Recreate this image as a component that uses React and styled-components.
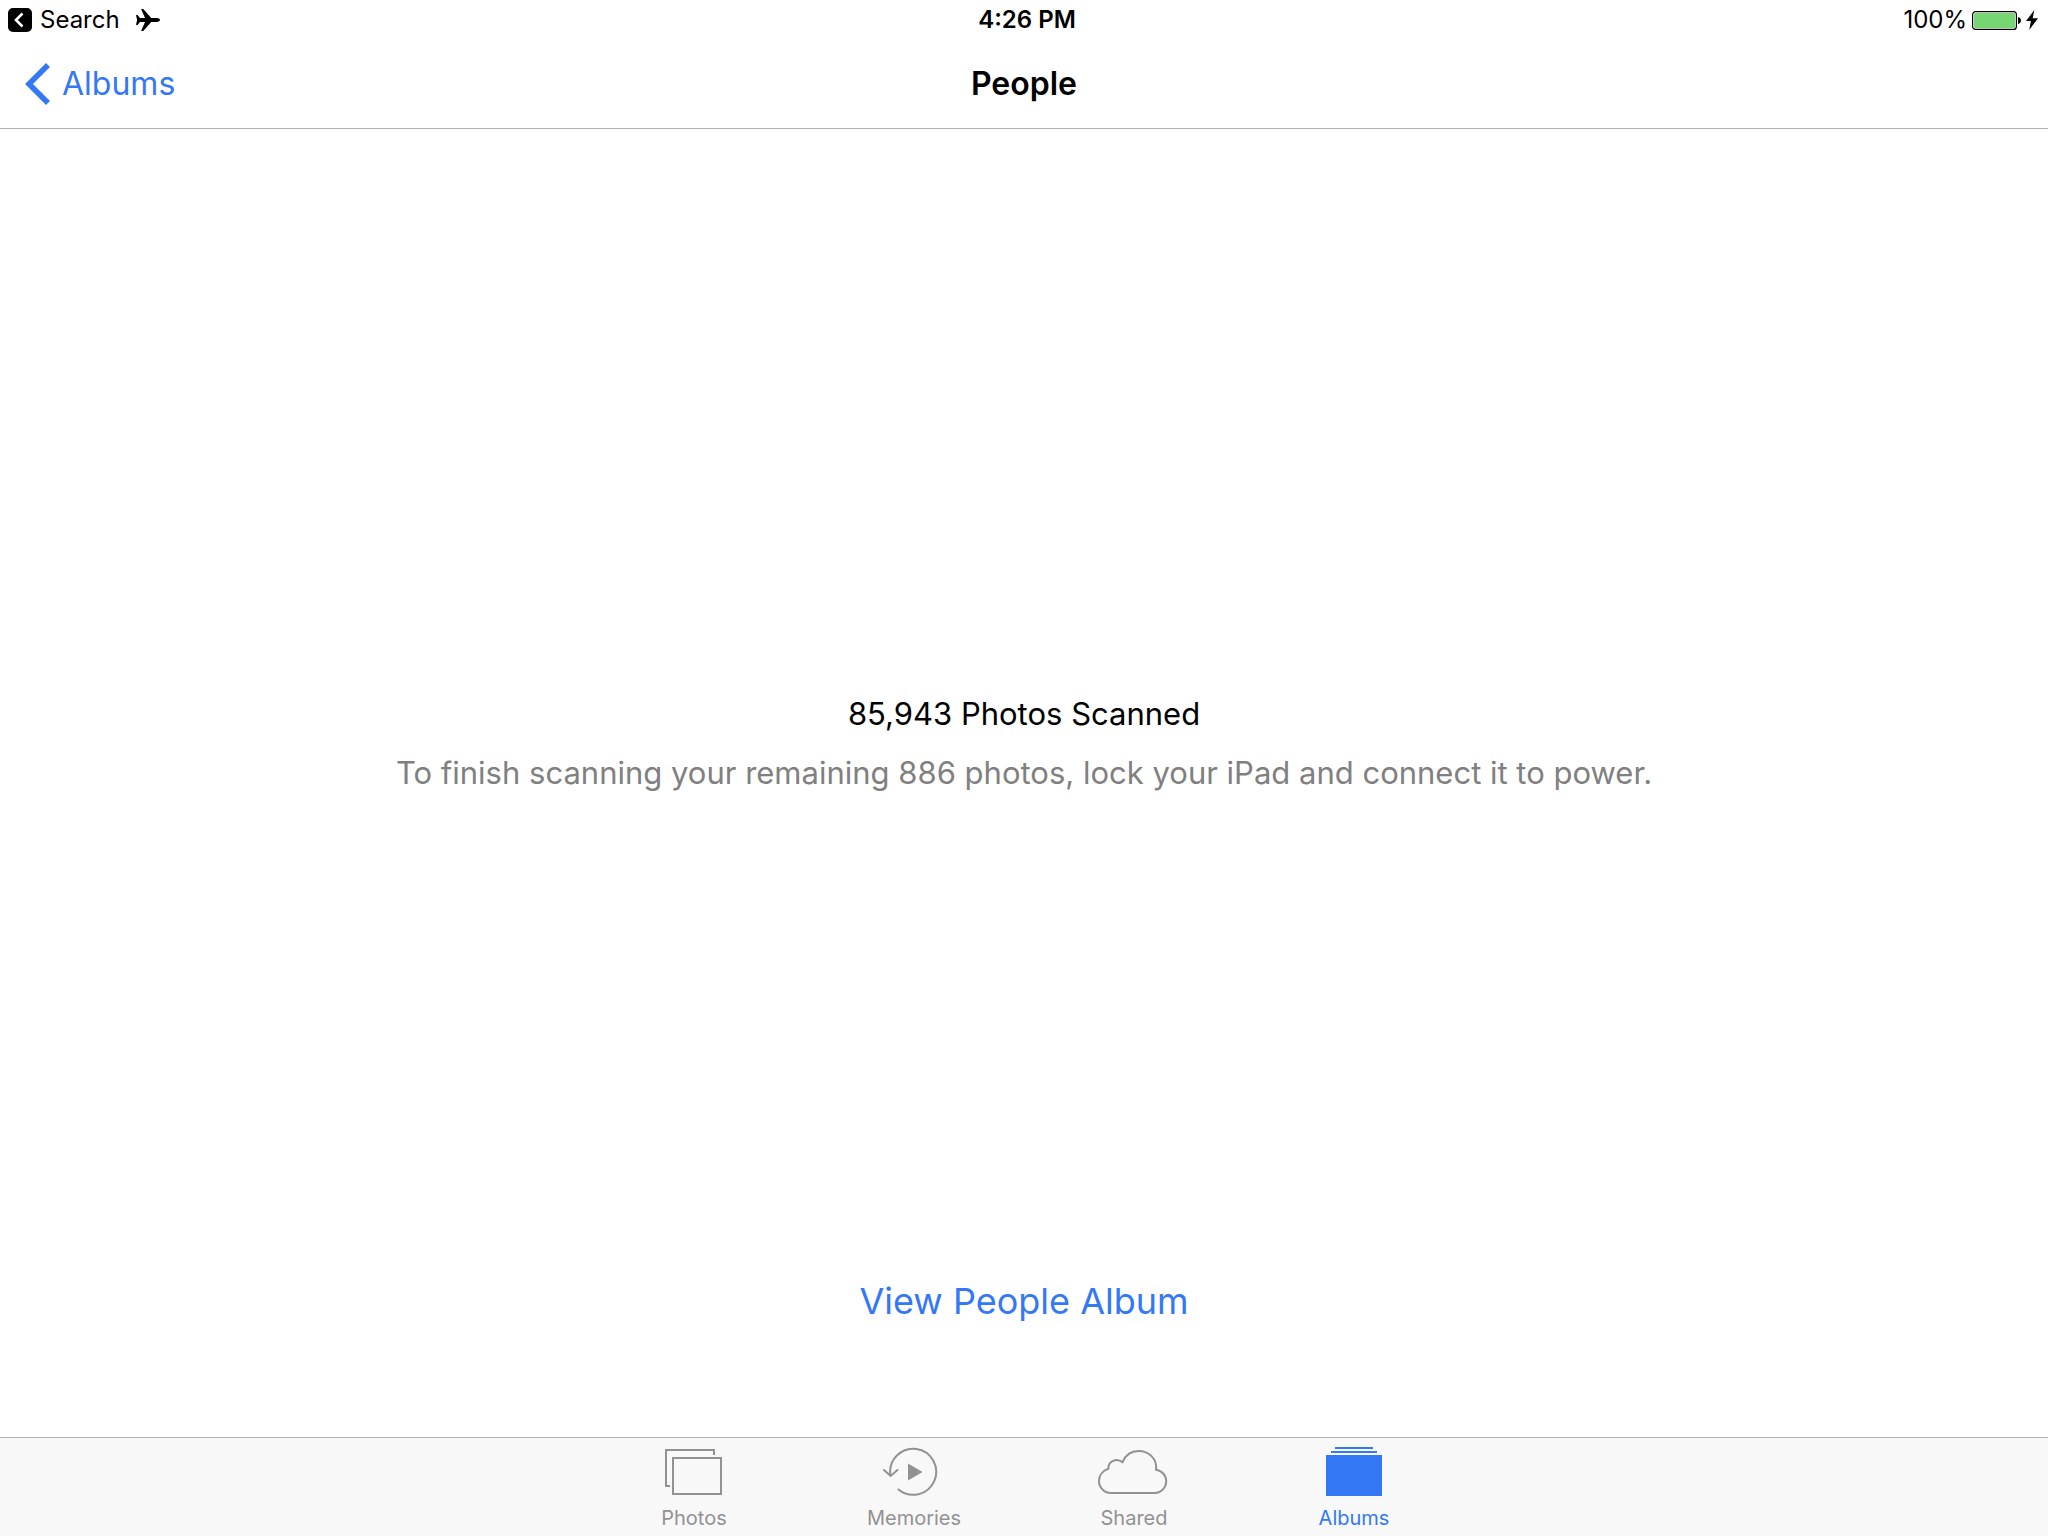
import React from 'react';
import styled, {createGlobalStyle} from "styled-components";

const tabs = [
    {name: 'Photos', icon: PhotosIcon},
    {name: 'Memories', icon: MemoriesIcon},
    {name: 'Shared', icon: CloudIcon},
    {name: 'Albums', icon: AlbumsIcon, active: true},
];

const App = () => {
    return (
        <Page>
            <GlobalStyle/>

            <StatusBar>
                <StatusGroup>
                    <BackToApp type="button">
                        <BackBadgeIcon/>
                        Search
                    </BackToApp>
                    <PlaneIcon/>
                </StatusGroup>
                <Clock>4:26 PM</Clock>
                <StatusGroup $end>
                    <span>100%</span>
                    <BatteryIcon/>
                    <BoltIcon/>
                </StatusGroup>
            </StatusBar>

            <NavBar>
                <BackLink href="#albums">
                    <ChevronIcon/>
                    Albums
                </BackLink>
                <Title>People</Title>
            </NavBar>

            <Content>
                <Message>
                    <Heading>85,943 Photos Scanned</Heading>
                    <Hint>To finish scanning your remaining 886 photos, lock your iPad and connect it to power.</Hint>
                </Message>
                <ViewButton type="button">View People Album</ViewButton>
            </Content>

            <TabBar>
                {tabs.map(({name, icon: Icon, active}) => (
                    <Tab key={name} href={`#${name.toLowerCase()}`} $active={active}
                         aria-current={active ? 'page' : undefined}>
                        <Icon/>
                        {name}
                    </Tab>
                ))}
            </TabBar>
        </Page>
    );
};

function BackBadgeIcon() {
    return (
        <svg width="24" height="24" viewBox="0 0 24 24" aria-hidden="true">
            <rect width="24" height="24" rx="5" fill="#000"/>
            <path d="M14.5 5.5L8 12l6.5 6.5" fill="none" stroke="#fff" strokeWidth="2.6"/>
        </svg>
    );
}

function PlaneIcon() {
    return (
        <svg width="24" height="22" viewBox="0 0 24 22" aria-hidden="true">
            <path d="M24 11c0 1.1-1.4 1.9-3.2 1.9h-5.6L8 21.2c-.4.5-.8.8-1.3.8H5.1l3.9-9.1H4L1.5 16H0l1.1-5L0 6h1.5L4 9.1h5L5.1 0h1.6c.5 0 .9.3 1.3.8l7.2 8.3h5.6C22.6 9.1 24 9.9 24 11z"/>
        </svg>
    );
}

function BatteryIcon() {
    return (
        <svg width="49" height="19" viewBox="0 0 49 19" aria-hidden="true">
            <rect x=".6" y=".6" width="43.8" height="17.8" rx="3" fill="#fff" stroke="#000" strokeWidth="1.2"/>
            <rect x="2" y="2" width="41" height="15" rx="1.5" fill="#76d672"/>
            <path d="M46 6c1.800.4 3 1.700 3 3.500s-1.200 3.100-3 3.500z"/>
        </svg>
    );
}

function BoltIcon() {
    return (
        <svg width="12" height="20" viewBox="0 0 12 20" aria-hidden="true">
            <path d="M8.3 0L0 11h4.900L3.200 20 12 8.200H6.700z"/>
        </svg>
    );
}

function ChevronIcon() {
    return (
        <svg width="26" height="42" viewBox="0 0 26 42" aria-hidden="true">
            <path d="M24 2L5 21l19 19" fill="none" stroke="currentColor" strokeWidth="5.6"/>
        </svg>
    );
}

function PhotosIcon() {
    return (
        <svg width="60" height="50" viewBox="0 0 60 50" fill="none" stroke="currentColor" strokeWidth="2"
             aria-hidden="true">
            <path d="M6 39H2V3h48v5"/>
            <rect x="9" y="11" width="48" height="36"/>
        </svg>
    );
}

function MemoriesIcon() {
    return (
        <svg width="62" height="50" viewBox="0 0 62 50" fill="none" stroke="currentColor" strokeWidth="2"
             strokeLinecap="round" aria-hidden="true">
            <path d="M7.400 28A23 23 0 1 1 15.500 42.500"/>
            <path d="M1 23l6.600 6 6.900-6"/>
            <path d="M25 16.500v17L39.500 25z" fill="currentColor" stroke="none"/>
        </svg>
    );
}

function CloudIcon() {
    return (
        <svg width="72" height="50" viewBox="0 0 72 50" fill="none" stroke="currentColor" strokeWidth="2"
             aria-hidden="true">
            <path d="M13 46h44a11.700 11.700 0 0 0 1-23.300C59.500 12 51 4 40.500 4 33.500 4 27.500 8 24.500 15.200 18.500 10.200 10 14.500 10.300 21.800 5 23.500 1 28 1 34c0 6.500 5.300 12 12 12z"/>
        </svg>
    );
}

function AlbumsIcon() {
    return (
        <svg width="56" height="50" viewBox="0 0 56 50" fill="currentColor" aria-hidden="true">
            <rect x="9" width="38" height="2"/>
            <rect x="5" y="4" width="46" height="2"/>
            <rect y="8" width="56" height="41"/>
        </svg>
    );
}

const GlobalStyle = createGlobalStyle`
  * {
    box-sizing: border-box;
  }

  body {
    margin: 0;
    background-color: #fff;
    color: #000;
    font-family: Inter, Roboto, sans-serif;
  }

  button {
    padding: 0;
    border: 0;
    background: none;
    color: inherit;
    font: inherit;
    cursor: pointer;
  }

  a {
    color: inherit;
    text-decoration: none;
  }

  svg {
    flex-shrink: 0;
  }
`;

const Page = styled.div`
  display: flex;
  flex-direction: column;
  min-height: 100vh;
`;

const StatusBar = styled.div`
  display: grid;
  grid-template-columns: 1fr auto 1fr;
  align-items: center;
  height: 40px;
  padding: 0 10px 0 8px;
  font-size: 24px;
  line-height: 28px;
`;

const StatusGroup = styled.div`
  display: flex;
  align-items: center;
  justify-content: ${({$end}) => $end ? 'flex-end' : 'flex-start'};
  gap: ${({$end}) => $end ? '5px' : '16px'};
`;

const BackToApp = styled.button`
  display: flex;
  align-items: center;
  gap: 8px;
`;

const Clock = styled.time`
  padding-left: 8px;
  font-weight: 600;
`;

const NavBar = styled.header`
  display: grid;
  grid-template-columns: 1fr auto 1fr;
  align-items: center;
  height: 89px;
  padding: 0 24px;
  border-bottom: 1px solid #b2b2b2;
`;

const BackLink = styled.a`
  display: flex;
  align-items: center;
  justify-self: start;
  gap: 12px;
  color: #3478f6;
  font-size: 32px;
  line-height: 40px;
`;

const Title = styled.h1`
  margin: 0;
  font-size: 32px;
  font-weight: 600;
  line-height: 40px;
`;

const Content = styled.main`
  flex: 1;
  display: flex;
  flex-direction: column;
  align-items: center;
  padding: 80px 24px 112px;
`;

const Message = styled.section`
  flex: 1;
  display: flex;
  flex-direction: column;
  justify-content: center;
  gap: 19px;
  text-align: center;
  font-size: 31px;
  line-height: 40px;
`;

const Heading = styled.h2`
  margin: 0;
  font-size: inherit;
  font-weight: 400;
`;

const Hint = styled.p`
  margin: 0;
  color: #808080;
`;

const ViewButton = styled.button`
  && {
    color: #3478f6;
    font-size: 36px;
    line-height: 48px;
  }
`;

const TabBar = styled.nav`
  display: flex;
  justify-content: center;
  gap: 68px;
  height: 99px;
  padding-top: 9px;
  border-top: 1px solid #b2b2b2;
  background-color: #f8f8f8;
`;

const Tab = styled.a`
  display: flex;
  flex-direction: column;
  align-items: center;
  gap: 9px;
  width: 152px;
  color: ${({$active}) => $active ? '#3478f6' : '#929292'};
  font-size: 20px;
  line-height: 24px;
`;

export default App;
